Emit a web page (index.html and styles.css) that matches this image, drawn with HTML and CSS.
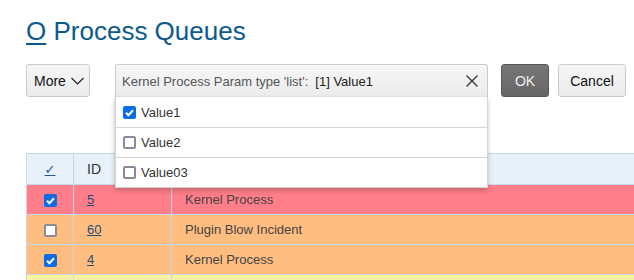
FILE: index.html
```html
<!DOCTYPE html>
<html>
<head>
<meta charset="utf-8">
<link rel="stylesheet" href="styles.css">
</head>
<body>
<div class="page">
  <h1 class="title"><span class="title-key">O</span> Process Queues</h1>
  <div class="toolbar">
    <button class="btn btn-more">More
      <svg class="chev" width="13" height="8" viewBox="0 0 13 8"><path d="M0.5 1 L6.5 7 L12.5 1" fill="none" stroke="#222" stroke-width="1.2"/></svg>
    </button>
    <div class="field-wrap">
      <div class="field">
        <span class="field-label">Kernel Process Param type 'list':</span>
        <span class="field-value">[1] Value1</span>
        <svg class="clear" width="12" height="12" viewBox="0 0 12 12"><path d="M0.5 0.5 L11.5 11.5 M11.5 0.5 L0.5 11.5" stroke="#333" stroke-width="1.3" fill="none"/></svg>
      </div>
      <div class="dropdown">
        <div class="opt"><span class="cb cb-on"><svg width="13" height="13" viewBox="0 0 13 13"><path d="M3 6.8 L5.4 9.2 L10 4.2" fill="none" stroke="#fff" stroke-width="2"/></svg></span>Value1</div>
        <div class="opt"><span class="cb"></span>Value2</div>
        <div class="opt"><span class="cb"></span>Value03</div>
      </div>
    </div>
    <button class="btn btn-ok">OK</button>
    <button class="btn btn-cancel">Cancel</button>
  </div>
  <table class="grid">
    <colgroup><col class="c1"><col class="c2"><col class="c3"></colgroup>
    <thead>
      <tr><th class="center"><a class="hdr-check" href="#">✓</a></th><th>ID</th><th></th></tr>
    </thead>
    <tbody>
      <tr class="r-red"><td class="center"><span class="cb cb-on"><svg width="13" height="13" viewBox="0 0 13 13"><path d="M3 6.8 L5.4 9.2 L10 4.2" fill="none" stroke="#fff" stroke-width="2"/></svg></span></td><td><a href="#">5</a></td><td>Kernel Process</td></tr>
      <tr class="r-orange"><td class="center"><span class="cb cb-white"></span></td><td><a href="#">60</a></td><td>Plugin Blow Incident</td></tr>
      <tr class="r-orange"><td class="center"><span class="cb cb-on"><svg width="13" height="13" viewBox="0 0 13 13"><path d="M3 6.8 L5.4 9.2 L10 4.2" fill="none" stroke="#fff" stroke-width="2"/></svg></span></td><td><a href="#">4</a></td><td>Kernel Process</td></tr>
      <tr class="r-yellow"><td></td><td></td><td></td></tr>
    </tbody>
  </table>
</div>
</body>
</html>
```
FILE: styles.css
```css
html, body {
  margin: 0;
  padding: 0;
  background: #fff;
  overflow: hidden;
}
body {
  font-family: "Liberation Sans", Arial, sans-serif;
  width: 634px;
  height: 280px;
}
.page {
  padding: 16px 0 0 26px;
}
.title {
  margin: 0;
  font-weight: normal;
  font-size: 26px;
  line-height: 30px;
  color: #0b5a8e;
}
.title-key {
  text-decoration: underline;
  text-decoration-thickness: 2px;
  text-underline-offset: 3px;
}
.toolbar {
  display: flex;
  align-items: flex-start;
  margin-top: 18px;
  height: 89px;
}
.btn {
  font-family: "Liberation Sans", Arial, sans-serif;
  font-size: 14px;
  height: 33px;
  border: 1px solid #cbcbcb;
  border-radius: 3px;
  background: linear-gradient(#f6f6f6, #ebebeb);
  color: #111;
  padding: 0 8px;
  display: flex;
  align-items: center;
}
.btn-more {
  width: 64px;
  padding: 0 0 0 7px;
  gap: 5px;
}
.chev { flex-shrink: 0; }
.field-wrap {
  position: relative;
  margin-left: 25px;
  width: 373px;
}
.field {
  height: 33px;
  box-sizing: border-box;
  border: 1px solid #cbcbcb;
  border-bottom: none;
  border-radius: 3px 3px 0 0;
  background: linear-gradient(#f6f6f6, #ebebeb);
  display: flex;
  align-items: center;
  padding: 0 9px 0 6px;
  font-size: 13px;
}
.field-label {
  color: #555;
}
.field-value {
  color: #222;
  margin-left: 7px;
  flex: 1;
}
.dropdown {
  position: absolute;
  left: 0;
  top: 33px;
  width: 373px;
  box-sizing: border-box;
  background: #fff;
  border: 1px solid #d4d4d4;
  border-top: none;
  box-shadow: 0 3px 5px rgba(0,0,0,0.18), -1px 0 3px rgba(0,0,0,0.08);
  z-index: 5;
}
.opt {
  height: 29px;
  display: flex;
  align-items: center;
  padding-left: 7px;
  font-size: 13px;
  color: #333;
  border-top: 1px solid #d4d4d4;
}
.opt:first-child { border-top: none; height: 30px; }
.cb {
  width: 13px;
  height: 13px;
  box-sizing: border-box;
  border: 2px solid #8c8a98;
  border-radius: 2px;
  background: #fff;
  display: inline-block;
  margin-right: 5px;
  position: relative;
}
.cb svg { position: absolute; left: -2px; top: -2px; }
.cb-on {
  background: #0b6ce8;
  border-color: #0b6ce8;
}
.cb-white { background: #fff; }
.btn-ok {
  margin-left: 13px;
  width: 48px;
  justify-content: center;
  background: linear-gradient(#777, #666);
  border-color: #5a5a5a;
  color: #eee;
}
.btn-cancel {
  margin-left: 9px;
  width: 68px;
  justify-content: center;
}
.grid {
  border-collapse: collapse;
  width: 700px;
  table-layout: fixed;
  font-size: 13px;
}
.c1 { width: 47px; }
.c2 { width: 98px; }
.grid th, .grid td {
  border: 1px solid #c3d9e7;
  padding: 0 0 0 13px;
  text-align: left;
  font-weight: normal;
  color: #444;
}
.grid th {
  background: #e8f1f9;
  height: 30px;
  color: #333;
  font-size: 14px;
}
.grid td { height: 29px; }
.grid .center { text-align: center; padding: 0; }
.grid td.center .cb { margin: 0; vertical-align: middle; }
.grid td a {
  color: #1d4d78;
  text-decoration: underline;
}
.hdr-check {
  color: #1d5a9a;
  text-decoration: underline;
  font-family: "DejaVu Sans", sans-serif;
  font-size: 13px;
}
.r-red td { background: #ff7e8a; }
.r-orange td { background: #ffbd80; }
.r-yellow td { background: #fff1a2; }
```
